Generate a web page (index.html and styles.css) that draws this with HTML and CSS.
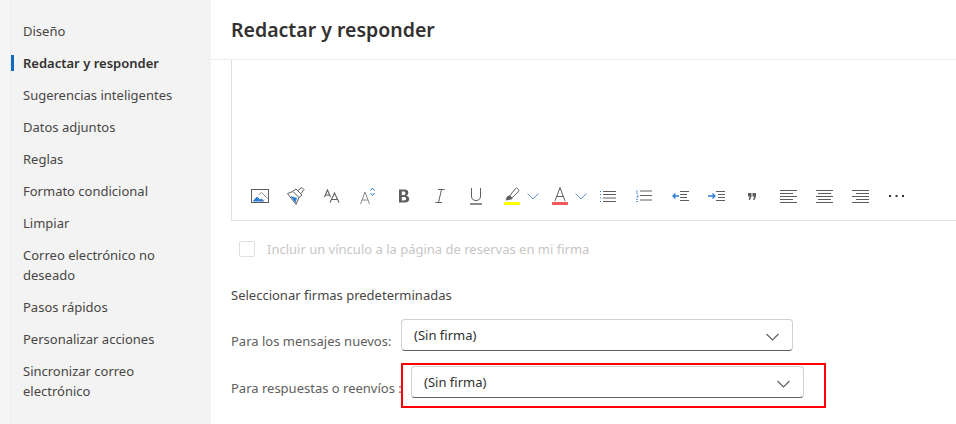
FILE: index.html
```html
<!DOCTYPE html>
<html>
<head>
    <title>Redactar y responder</title>
    <link rel="stylesheet" href="styles.css">
</head>
<body>
    <div class="app">
        <!-- Settings menu -->
        <nav class="sidebar">
            <a class="nav-item">Diseño</a>
            <a class="nav-item active">Redactar y responder</a>
            <a class="nav-item">Sugerencias inteligentes</a>
            <a class="nav-item">Datos adjuntos</a>
            <a class="nav-item">Reglas</a>
            <a class="nav-item">Formato condicional</a>
            <a class="nav-item">Limpiar</a>
            <a class="nav-item">Correo electrónico no deseado</a>
            <a class="nav-item">Pasos rápidos</a>
            <a class="nav-item">Personalizar acciones</a>
            <a class="nav-item">Sincronizar correo electrónico</a>
        </nav>

        <main class="main">
            <h1 class="title">Redactar y responder</h1>

            <!-- Signature editor -->
            <div class="editor">
                <div class="toolbar">
                    <button class="tool">
                        <svg width="18" height="14" viewBox="0 0 18 14"><rect x="0.500" y="0.500" width="17" height="13" fill="none" stroke="#605e5c"/><path d="M1.500 12.500l4.500-5 3 3 1.500-1 3 3z" fill="#2b7cd3"/><path d="M8 5.500l2.500-2 6 6M11 12.500l2-2" fill="none" stroke="#8a8886"/></svg>
                    </button>
                    <button class="tool">
                        <svg width="18" height="18" viewBox="0 0 18 18"><path d="M0.500 6.500l5.500-2 6 6-3 7z" fill="none" stroke="#605e5c"/><path d="M3.500 9l6.500 2-1.500 5z" fill="#2b7cd3"/><path d="M6 4l3-2 6 6-3 2.500" fill="none" stroke="#605e5c"/><path d="M11 3.500l4-3 2 2-3 4" fill="none" stroke="#605e5c"/></svg>
                    </button>
                    <button class="tool">
                        <svg width="16" height="14" viewBox="0 0 16 14"><path d="M0.500 8L3.500 1l3 7M1.500 6h4M6 13.500L10.500 4l4.500 9.500M7.500 10.500h6" fill="none" stroke="#605e5c" stroke-width="1.100"/></svg>
                    </button>
                    <button class="tool">
                        <svg width="16" height="18" viewBox="0 0 16 18"><path d="M0.500 17L5 5l4.500 12M2 13h6" fill="none" stroke="#8a8886"/><path d="M10.500 3.500L12.500 1l2 2.500M10.500 6L12.500 8.500l2-2.500" fill="none" stroke="#2b7cd3"/></svg>
                    </button>
                    <button class="tool">
                        <svg width="12" height="14" viewBox="0 0 12 14"><path d="M1 0.500h5.500c2.500 0 3.800 1.200 3.800 3.200 0 1.500-.9 2.600-2.300 3 1.900.2 3.200 1.400 3.200 3.200 0 2.300-1.700 3.600-4.400 3.600H1zM3.800 2.600v3.400h1.800c1.200 0 1.900-.6 1.900-1.800 0-1-.7-1.600-1.900-1.600zM3.800 8v3.400h2.200c1.400 0 2.100-.6 2.100-1.700S7.400 8 6 8z" fill="#605e5c" fill-rule="evenodd"/></svg>
                    </button>
                    <button class="tool">
                        <svg width="10" height="14" viewBox="0 0 10 14"><path d="M3 0.500h6.500M0.500 13.500H7M6.500 0.500L3.500 13.500" fill="none" stroke="#605e5c"/></svg>
                    </button>
                    <button class="tool">
                        <svg width="12" height="17" viewBox="0 0 12 17"><path d="M1.500 0v8c0 3 1.600 4.500 4.500 4.500s4.500-1.500 4.500-4.500V0" fill="none" stroke="#605e5c"/><path d="M0 16h12" stroke="#605e5c" stroke-width="1.400"/></svg>
                    </button>
                    <button class="tool split">
                        <svg width="16" height="18" viewBox="0 0 16 18"><path d="M5.500 9L11.500 1.500c.6-.6 1.200-.6 1.800 0l1.200 1c.6.6.6 1.200 0 1.800L8 11z" fill="none" stroke="#605e5c"/><path d="M1.500 13.500L3 9.500l2.500-1 3 2.500-1 1.500z" fill="#605e5c"/><rect y="15" width="16" height="3" fill="#ffff00"/></svg>
                        <svg class="chevron-sm" width="12" height="7" viewBox="0 0 12 7"><path d="M0.500 0.500L6 6l5.500-5.500" fill="none" stroke="#6b8fd6"/></svg>
                    </button>
                    <button class="tool split">
                        <svg width="16" height="18" viewBox="0 0 16 18"><path d="M3 14L8 0.500 13 14M4.700 9.500h6.600" fill="none" stroke="#605e5c"/><rect y="15" width="16" height="3" fill="#f0595a"/></svg>
                        <svg class="chevron-sm" width="12" height="7" viewBox="0 0 12 7"><path d="M0.500 0.500L6 6l5.500-5.500" fill="none" stroke="#6b8fd6"/></svg>
                    </button>
                    <button class="tool">
                        <svg width="16" height="11" viewBox="0 0 16 11"><path d="M0.500 0v1M0.500 3v1M0.500 6.500v1M0.500 10v1" stroke="#2b7cd3"/><path d="M3 .5h13M3 3.500h13M3 7h13M3 10.500h13" stroke="#605e5c"/></svg>
                    </button>
                    <button class="tool">
                        <svg width="16" height="12" viewBox="0 0 16 12"><path d="M1 0v4M1 5h1v2H1v1M0 9.500h2M0 11.500h2" fill="none" stroke="#6b9fdc"/><path d="M4 1h12M4 5.500h12M4 10h12" stroke="#605e5c"/></svg>
                    </button>
                    <button class="tool">
                        <svg width="17" height="10" viewBox="0 0 17 10"><path d="M8 .5h9M8 3.500h7M8 6.500h7M8 9.500h9" stroke="#605e5c"/><path d="M7 5H1M3.500 2.500L1 5l2.500 2.500" fill="none" stroke="#2b7cd3" stroke-width="1.300"/></svg>
                    </button>
                    <button class="tool">
                        <svg width="17" height="10" viewBox="0 0 17 10"><path d="M8 .5h9M10 3.500h7M10 6.500h7M8 9.500h9" stroke="#605e5c"/><path d="M0 5h7M4.500 2.500L7 5 4.500 7.500" fill="none" stroke="#2b7cd3" stroke-width="1.300"/></svg>
                    </button>
                    <button class="tool">
                        <svg width="8" height="7" viewBox="0 0 8 7"><path d="M0 0h3.500v3.500L2 7H0.700L1.600 3.500H0zM4.500 0H8v3.500L6.500 7H5.200L6.100 3.500H4.500z" fill="#605e5c"/></svg>
                    </button>
                    <button class="tool">
                        <svg width="17" height="13" viewBox="0 0 17 13"><path d="M0 .5h17M0 3.500h13M0 6.500h17M0 9.500h13M0 12.500h17" stroke="#605e5c"/></svg>
                    </button>
                    <button class="tool">
                        <svg width="17" height="13" viewBox="0 0 17 13"><path d="M0 .5h17M2 3.500h13M0 6.500h17M2 9.500h13M0 12.500h17" stroke="#605e5c"/></svg>
                    </button>
                    <button class="tool">
                        <svg width="17" height="13" viewBox="0 0 17 13"><path d="M0 .5h17M4 3.500h13M0 6.500h17M4 9.500h13M0 12.500h17" stroke="#605e5c"/></svg>
                    </button>
                    <button class="tool">
                        <svg width="15" height="2" viewBox="0 0 15 2"><path d="M0 0h2v2H0zM6.500 0h2v2h-2zM13 0h2v2h-2z" fill="#323130"/></svg>
                    </button>
                </div>
            </div>

            <label class="check-row">
                <span class="checkbox"></span>
                Incluir un vínculo a la página de reservas en mi firma
            </label>

            <p class="section-label">Seleccionar firmas predeterminadas</p>

            <div class="field first">
                <span class="field-label">Para los mensajes nuevos:</span>
                <div class="select">
                    <span>(Sin firma)</span>
                    <svg width="13" height="8" viewBox="0 0 13 8"><path d="M0.500 1l6 6 6-6" fill="none" stroke="#605e5c" stroke-width="1.100"/></svg>
                </div>
            </div>

            <div class="field second">
                <span class="field-label">Para respuestas o reenvíos :</span>
                <div class="select">
                    <span>(Sin firma)</span>
                    <svg width="13" height="8" viewBox="0 0 13 8"><path d="M0.500 1l6 6 6-6" fill="none" stroke="#605e5c" stroke-width="1.100"/></svg>
                </div>
                <div class="highlight"></div>
            </div>
        </main>
    </div>
</body>
</html>
```

FILE: styles.css
```css
html, body {
    margin: 0;
    height: 100%;
    overflow: hidden;
    background: #fff;
}
body {
    font-family: "Noto Sans", "Open Sans", sans-serif;
    font-size: 13px;
    color: #323130;
}
.app {
    display: flex;
    height: 424px;
    background: #f5f5f5;
}
.sidebar {
    width: 201px;
    margin-left: 10px;
    padding-top: 15px;
    box-sizing: border-box;
    background: #f3f3f3;
    border-left: 1px solid #ececec;
    flex-shrink: 0;
}
.nav-item {
    display: block;
    position: relative;
    padding: 6px 30px 6px 12px;
    line-height: 20px;
    color: #484644;
}
.nav-item.active {
    font-weight: 600;
    color: #323130;
}
.nav-item.active::before {
    content: "";
    position: absolute;
    left: 0;
    top: 8px;
    width: 3px;
    height: 16px;
    background: #0f6cbd;
}
.main {
    flex: 1;
    min-width: 0;
    background: #fff;
}
.title {
    margin: 0;
    height: 59px;
    padding-left: 20px;
    font-size: 19.5px;
    font-weight: 600;
    line-height: 60px;
    border-bottom: 1px solid #edebe9;
}
.editor {
    margin-left: 20px;
    height: 161px;
    box-sizing: border-box;
    border-left: 1px solid #e1dfdd;
    border-bottom: 1px solid #e1dfdd;
    display: flex;
    align-items: flex-end;
}
.toolbar {
    display: flex;
    margin-left: 10px;
    padding-bottom: 8px;
}
.tool {
    width: 36px;
    height: 32px;
    padding: 0;
    border: none;
    background: none;
    display: flex;
    align-items: center;
    justify-content: center;
}
.tool.split {
    width: 48px;
    justify-content: flex-start;
    padding-left: 10px;
    gap: 7px;
}
.check-row {
    display: flex;
    align-items: center;
    margin: 20px 0 0 28px;
    height: 16px;
    color: #c8c6c4;
}
.checkbox {
    width: 14px;
    height: 14px;
    margin-right: 12px;
    border: 1px solid #e1dfdd;
    border-radius: 2px;
}
.section-label {
    margin: 28px 0 0 20px;
    line-height: 20px;
    color: #484644;
}
.field {
    display: flex;
    align-items: center;
    position: relative;
    margin-left: 20px;
}
.field.first {
    margin-top: 14px;
}
.field.second {
    margin-top: 15px;
}
.field-label {
    color: #605e5c;
    padding-top: 12px;
}
.first .field-label {
    width: 170px;
}
.second .field-label {
    width: 180px;
}
.select {
    width: 392px;
    height: 32px;
    box-sizing: border-box;
    padding: 0 13px 0 12px;
    display: flex;
    align-items: center;
    justify-content: space-between;
    border: 1px solid #d1d1d1;
    border-bottom-color: #616161;
    border-radius: 4px;
}
.second .select {
    width: 393px;
}
.select span {
    color: #323130;
    padding-bottom: 1px;
}
.select svg {
    margin-top: 4px;
}
.highlight {
    position: absolute;
    left: 170px;
    top: -3px;
    width: 425px;
    height: 45px;
    box-sizing: border-box;
    border: 2px solid #f00;
}
```
